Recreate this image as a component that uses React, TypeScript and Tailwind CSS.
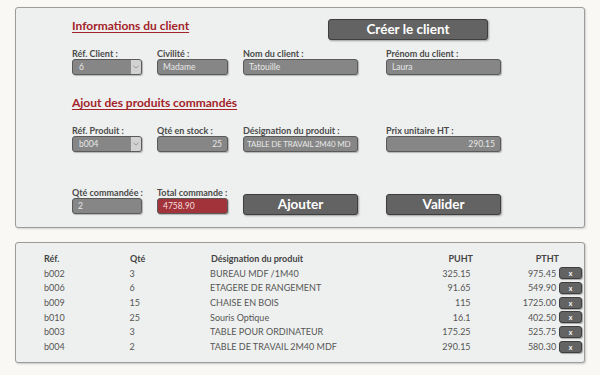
import type { ReactNode } from "react";

const LINES = [
  { ref: "b002", qte: "3", des: "BUREAU MDF /1M40", puht: "325.15", ptht: "975.45" },
  { ref: "b006", qte: "6", des: "ETAGERE DE RANGEMENT", puht: "91.65", ptht: "549.90" },
  { ref: "b009", qte: "15", des: "CHAISE EN BOIS", puht: "115", ptht: "1725.00" },
  { ref: "b010", qte: "25", des: "Souris Optique", puht: "16.1", ptht: "402.50" },
  { ref: "b003", qte: "3", des: "TABLE POUR ORDINATEUR", puht: "175.25", ptht: "525.75" },
  { ref: "b004", qte: "2", des: "TABLE DE TRAVAIL 2M40 MDF", puht: "290.15", ptht: "580.30" },
];

function Field({ label, width, children }: { label: string; width: string; children: ReactNode }) {
  return (
    <div className={`flex flex-col ${width}`}>
      <span className="text-[9px] leading-[10px] font-bold text-[#4a4a4a] whitespace-nowrap">{label}</span>
      <div>{children}</div>
    </div>
  );
}

function Input({ value, right, red, tight }: { value: string; right?: boolean; red?: boolean; tight?: boolean }) {
  return (
    <div
      className={`h-[16px] rounded-[3px] border border-[#5a5a5a] leading-[14px] whitespace-nowrap overflow-hidden shadow-[1px_1px_1px_rgba(0,0,0,0.25)] ${
        red ? "bg-[#a3333a] text-[#f3dede]" : "bg-[#868686] text-[#e6e6e6]"
      } ${right ? "text-right" : ""} ${tight ? "px-[3px] text-[8px] tracking-[-0.2px]" : "px-[5px] text-[8.5px]"}`}
    >
      {value}
    </div>
  );
}

function Select({ value }: { value: string }) {
  return (
    <div className="h-[16px] rounded-[3px] border border-[#5a5a5a] bg-[#868686] flex shadow-[1px_1px_1px_rgba(0,0,0,0.25)] overflow-hidden">
      <span className="flex-1 px-[6px] text-[8.5px] leading-[14px] text-[#e6e6e6]">{value}</span>
      <span className="w-[11px] bg-[#d2d2d2] border-l border-[#8a8a8a] flex items-center justify-center">
        <svg width="6" height="4" viewBox="0 0 6 4" fill="none">
          <path d="M0.5 0.8l2.5 2.3 2.5-2.3" stroke="#888" strokeWidth="0.8" />
        </svg>
      </span>
    </div>
  );
}

function Button({ label, width }: { label: string; width: string }) {
  return (
    <div
      className={`${width} h-[21px] rounded-[3px] border border-[#3e3e3e] bg-[#636363] text-white font-bold text-[13.5px] leading-[19px] text-center shadow-[1px_1px_2px_rgba(0,0,0,0.35)]`}
    >
      {label}
    </div>
  );
}

export default function App() {
  return (
    <div
      className="w-[600px] h-[375px] bg-[#faf8f5] pt-[7px] px-[15px] overflow-hidden"
      style={{ fontFamily: "Lato, 'Open Sans', sans-serif" }}
    >
      {/* Formulaire */}
      <div className="h-[221px] rounded-[3px] border border-[#9c9c9c] bg-[#eef0ef] shadow-[1px_1px_2px_rgba(0,0,0,0.15)] pl-[56px] pt-[11px]">
        <div className="flex items-start">
          <h2 className="w-[256px] mt-[-1px] text-[12px] leading-[16px] font-bold text-[#a3232a] underline underline-offset-2 decoration-1">
            Informations du client
          </h2>
          <Button label="Créer le client" width="w-[160px]" />
        </div>

        <div className="flex mt-[9px]">
          <Field label="Réf. Client :" width="w-[70px] mr-[15px]">
            <Select value="6" />
          </Field>
          <Field label="Civilité :" width="w-[71px] mr-[15px]">
            <Input value="Madame" />
          </Field>
          <Field label="Nom du client :" width="w-[115px] mr-[28px]">
            <Input value="Tatouille" />
          </Field>
          <Field label="Prénom du client :" width="w-[115px]">
            <Input value="Laura" />
          </Field>
        </div>

        <h2 className="mt-[20px] text-[12px] leading-[16px] font-bold text-[#a3232a] underline underline-offset-2 decoration-1">
          Ajout des produits commandés
        </h2>

        <div className="flex mt-[15px]">
          <Field label="Réf. Produit :" width="w-[70px] mr-[15px]">
            <Select value="b004" />
          </Field>
          <Field label="Qté en stock :" width="w-[71px] mr-[15px]">
            <Input value="25" right />
          </Field>
          <Field label="Désignation du produit :" width="w-[115px] mr-[28px]">
            <Input value="TABLE DE TRAVAIL 2M40 MD" tight />
          </Field>
          <Field label="Prix unitaire HT :" width="w-[115px]">
            <Input value="290.15" right />
          </Field>
        </div>

        <div className="flex items-end mt-[36px]">
          <Field label="Qté commandée :" width="w-[70px] mr-[15px]">
            <Input value="2" />
          </Field>
          <Field label="Total commande :" width="w-[71px] mr-[15px]">
            <Input value="4758.90" red />
          </Field>
          <div className="mr-[28px] mb-[-1px]">
            <Button label="Ajouter" width="w-[115px]" />
          </div>
          <div className="mb-[-1px]">
            <Button label="Valider" width="w-[115px]" />
          </div>
        </div>
      </div>

      {/* Lignes de commande */}
      <div className="mt-[14px] h-[121px] rounded-[3px] border border-[#9c9c9c] bg-[#eef0ef] shadow-[1px_1px_2px_rgba(0,0,0,0.2)] pt-[8px] pl-[28px] pr-[2px]">
        <div className="flex items-center h-[15px] text-[9px] font-bold text-[#444]">
          <span className="w-[86px]">Réf.</span>
          <span className="w-[81px]">Qté</span>
          <span className="w-[158px]">Désignation du produit</span>
          <span className="w-[104px] text-right">PUHT</span>
          <span className="w-[86px] text-right">PTHT</span>
        </div>
        {LINES.map((l) => (
          <div key={l.ref} className="flex items-center h-[14.7px] text-[9px] text-[#555]">
            <span className="w-[86px]">{l.ref}</span>
            <span className="w-[81px]">{l.qte}</span>
            <span className="w-[158px] whitespace-nowrap">{l.des}</span>
            <span className="w-[104px] text-right">{l.puht}</span>
            <span className="w-[86px] text-right">{l.ptht}</span>
            <span className="ml-[3px] w-[23px] h-[12px] rounded-[3px] border border-[#3e3e3e] bg-[#636363] text-white text-[7px] leading-[10px] font-bold text-center shadow-[1px_1px_1px_rgba(0,0,0,0.3)]">
              x
            </span>
          </div>
        ))}
      </div>
    </div>
  );
}
